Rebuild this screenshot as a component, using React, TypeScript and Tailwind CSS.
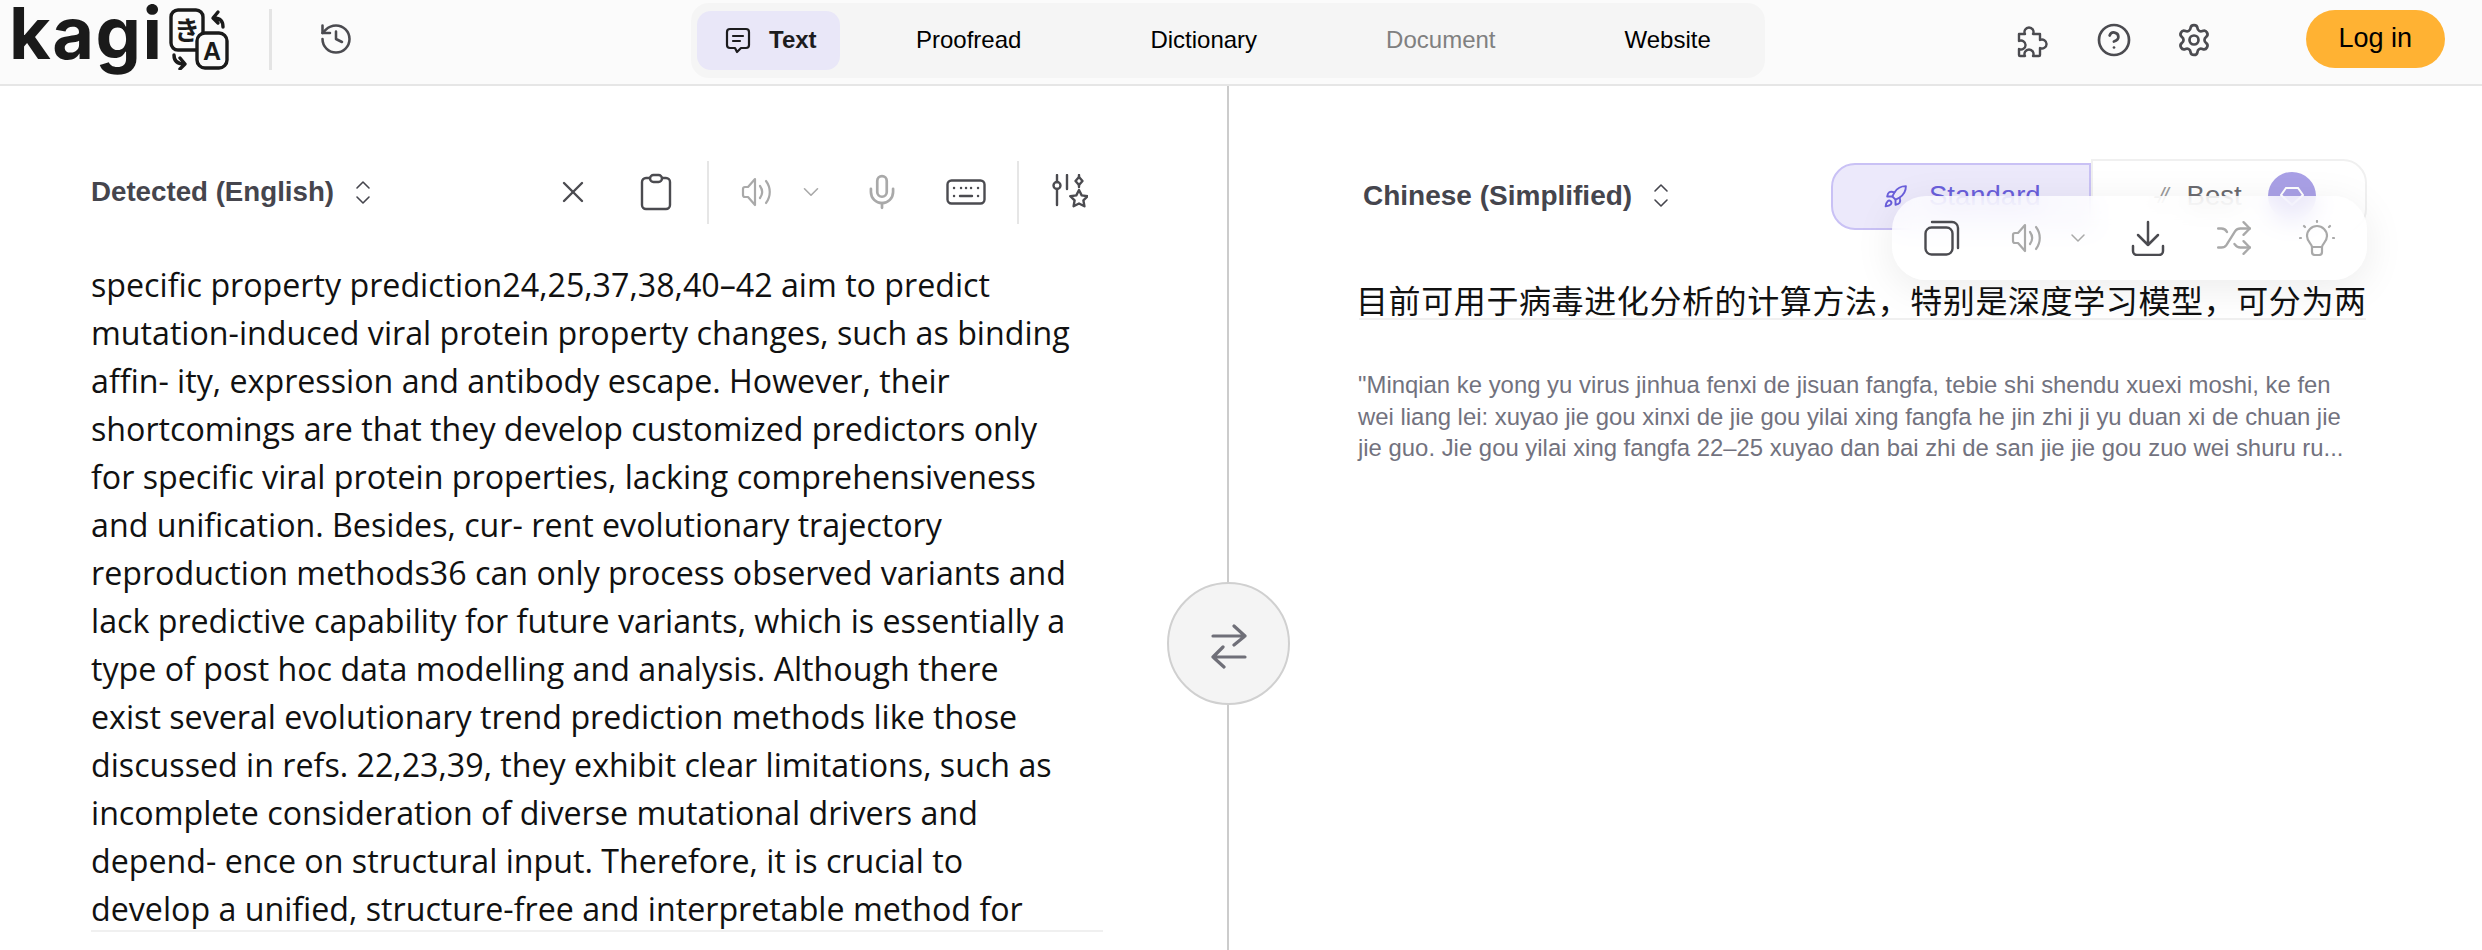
import React from 'react';
import { History, CircleHelp, Settings, X, Mic, ChevronDown, Rocket, Shuffle } from 'lucide-react';

const sans = "font-['Liberation_Sans',Arial,sans-serif]";

const leftText =
  'specific property prediction24,25,37,38,40–42 aim to predict mutation-induced viral protein property changes, such as binding affin- ity, expression and antibody escape. However, their shortcomings are that they develop customized predictors only for specific viral protein properties, lacking comprehensiveness and unification. Besides, cur- rent evolutionary trajectory reproduction methods36 can only process observed variants and lack predictive capability for future variants, which is essentially a type of post hoc data modelling and analysis. Although there exist several evolutionary trend prediction methods like those discussed in refs. 22,23,39, they exhibit clear limitations, such as incomplete consideration of diverse mutational drivers and depend- ence on structural input. Therefore, it is crucial to develop a unified, structure-free and interpretable method for';

const pinyin =
  '"Minqian ke yong yu virus jinhua fenxi de jisuan fangfa, tebie shi shendu xuexi moshi, ke fen wei liang lei: xuyao jie gou xinxi de jie gou yilai xing fangfa he jin zhi ji yu duan xi de chuan jie jie guo. Jie gou yilai xing fangfa 22–25 xuyao dan bai zhi de san jie jie gou zuo wei shuru ru...';

function UpDown() {
  return (
    <svg width="16" height="25" viewBox="0 0 16 25" fill="none" stroke="#45454d" strokeWidth="1.6" strokeLinecap="round" strokeLinejoin="round">
      <path d="M2 8l6-6 6 6" />
      <path d="M2 17l6 6 6-6" />
    </svg>
  );
}

function Speaker() {
  return (
    <svg width="34" height="34" viewBox="0 0 34 34" fill="none" stroke="#a9a9a9" strokeWidth="2.2" strokeLinecap="round" strokeLinejoin="round">
      <path d="M2 14v6a2 2 0 0 0 2 2h3l7 8V4L7 12H4a2 2 0 0 0-2 2z" />
      <path d="M19 11c2.6 3.6 2.6 8.400 0 12" />
      <path d="M25 6c5 6.500 5 15.500 0 22" />
    </svg>
  );
}

function TextBubble() {
  return (
    <svg width="26" height="27" viewBox="0 0 26 27" fill="none" stroke="#1c1c1e" strokeWidth="2.200" strokeLinecap="round" strokeLinejoin="round">
      <path d="M5 2h16a3 3 0 0 1 3 3v13a3 3 0 0 1-3 3h-5l-4 4-2-4H5a3 3 0 0 1-3-3V5a3 3 0 0 1 3-3z" />
      <path d="M8 9h10M8 14h7" />
    </svg>
  );
}

function PuzzleIcon() {
  return (
    <svg className="mb-[4px] ml-[251px]" width="34" height="36" viewBox="0 0 34 36" fill="none" stroke="#4b4b50" strokeWidth="2.400" strokeLinecap="round" strokeLinejoin="round">
      <path d="M3 12h6a4.500 4.500 0 1 1 8 0h7v6a4.500 4.500 0 1 1 0 8v7a1 1 0 0 1-1 1h-6a4.500 4.500 0 1 0-8 0H4a1 1 0 0 1-1-1v-6a4.500 4.500 0 1 0 0-8z" />
    </svg>
  );
}

function Logo() {
  return (
    <div className="flex items-start">
      <span className="ml-[9px] font-['Inter',sans-serif] text-[72px] leading-[66px] font-bold tracking-[1.500px] text-[#1a1a1a]">kagi</span>
      <svg className="ml-[5px] mt-[8px]" width="60" height="62" viewBox="0 0 60 62" fill="none" stroke="#1a1a1a" strokeWidth="3.400" strokeLinecap="round" strokeLinejoin="round">
        <rect x="2" y="2" width="32" height="40" rx="7" />
        <text x="18" y="32" textAnchor="middle" stroke="none" fill="#1a1a1a" fontSize="26" fontWeight="700" fontFamily="'Noto Sans CJK JP', sans-serif">き</text>
        <rect x="28" y="25" width="30" height="35" rx="8" fill="#fbfbfb" />
        <text x="43" y="52" textAnchor="middle" stroke="none" fill="#1a1a1a" fontSize="25" fontWeight="700" fontFamily="'Liberation Sans', sans-serif">A</text>
        <path d="M54 19c0-6-3-9-9-9M49 4l-5 6 5 5" />
        <path d="M5 47c0 6 3 9 10 9M11 50l5 6-5 5" />
      </svg>
    </div>
  );
}

function Header() {
  return (
    <header className="flex h-[86px] items-center border-b-2 border-[#e6e6e6] bg-[#fbfbfb]">
      <div className="flex h-full w-[691px] items-start">
        <Logo />
        <div className="ml-[40px] mt-[9px] h-[61px] w-[3px] bg-[#e4e4e4]" />
        <History className="ml-[46px] mt-[21px]" size={36} strokeWidth={1.7} color="#4b4b50" />
      </div>
      <nav className={`mb-[4px] flex h-[75px] items-center gap-[21px] rounded-[18px] bg-[#f5f5f5] pl-[6px] text-[24px] text-black ${sans}`}>
        <div className="mr-[1px] flex h-[59px] w-[143px] items-center gap-[18px] rounded-[14px] bg-[#e9e7f8] pl-[28px] font-bold text-[#1c1c1e]">
          <TextBubble />
          <span>Text</span>
        </div>
        <span className="px-[54px]">Proofread</span>
        <span className="px-[54px]">Dictionary</span>
        <span className="px-[54px] text-[#808080]">Document</span>
        <span className="px-[54px]">Website</span>
      </nav>
      <div className="flex flex-1 items-center">
        <PuzzleIcon />
        <CircleHelp className="ml-[46px] mb-[4px]" size={36} strokeWidth={1.8} color="#4b4b50" />
        <Settings className="ml-[44px] mb-[4px]" size={36} strokeWidth={1.8} color="#4b4b50" />
        <button className={`ml-[94px] mb-[7px] h-[58px] w-[139px] rounded-full bg-[#ffb233] text-[27px] text-black ${sans}`}>Log in</button>
      </div>
    </header>
  );
}

function LeftPanel() {
  return (
    <section className="w-[1227px] shrink-0 pl-[91px] pr-[106px]">
      <div className="mt-[78px] flex h-[56px] items-center">
        <span className={`text-[27.700px] font-bold text-[#45454d] ${sans}`}>Detected (English)</span>
        <span className="ml-[21px]"><UpDown /></span>
        <div className="ml-auto flex items-center">
          <span className="flex w-[83px] justify-center"><X size={36} strokeWidth={1.600} color="#4b4b50" /></span>
          <span className="flex w-[83px] justify-center">
            <svg width="32" height="38" viewBox="0 0 32 38" fill="none" stroke="#4b4b50" strokeWidth="2.400" strokeLinecap="round" strokeLinejoin="round">
              <path d="M10 5H6a4 4 0 0 0-4 4v23a4 4 0 0 0 4 4h20a4 4 0 0 0 4-4V9a4 4 0 0 0-4-4h-4" />
              <rect x="10" y="2" width="12" height="7" rx="3.500" />
            </svg>
          </span>
          <div className="ml-[10px] mr-[24px] h-[63px] w-[2px] bg-[#e6e6e6]" />
          <span className="flex w-[50px] justify-center"><Speaker /></span>
          <span className="flex w-[56px] justify-center"><ChevronDown size={26} strokeWidth={1.500} color="#a9a9a9" /></span>
          <span className="flex w-[86px] justify-center"><Mic size={38} strokeWidth={1.700} color="#a9a9a9" /></span>
          <span className="flex w-[82px] justify-center">
            <svg width="40" height="26" viewBox="0 0 40 26" fill="none" stroke="#4b4b50" strokeWidth="2.400" strokeLinecap="round">
              <rect x="1.500" y="1.500" width="37" height="23" rx="4" />
              <path d="M8 9h.1M15 9h.1M20 9h.1M25 9h.1M32 9h.1M8 17h.1M14 17h12M32 17h.1" />
            </svg>
          </span>
          <div className="ml-[10px] h-[63px] w-[2px] bg-[#e6e6e6]" />
          <span className="flex w-[102px] justify-center">
            <svg width="36" height="37" viewBox="0 0 36 37" fill="none" stroke="#4b4b50" strokeWidth="2.400" strokeLinecap="round" strokeLinejoin="round">
              <path d="M5 1v7M5 15v16M15 1v14M27 1v2M27 11v2" />
              <circle cx="5" cy="11.500" r="3.500" />
              <path d="M27 3l3.500 4-3.500 4-3.500-4z" />
              <path d="M27 16l2.700 5.400 6 .8-4.300 4.200 1 5.900-5.400-2.800-5.400 2.800 1-5.900-4.300-4.200 6-.8z" />
            </svg>
          </span>
        </div>
      </div>
      <div className="mt-[41px] h-[671px] w-[1012px] border-b-2 border-[#f0f0f0] pr-[29px] font-['Open_Sans',sans-serif] text-[32.200px] leading-[48px] text-[#111]">
        {leftText}
      </div>
    </section>
  );
}

function Divider() {
  return (
    <div className="relative w-[2px] shrink-0 bg-[#cccccc]">
      <button className="absolute left-[-60px] top-[496px] flex h-[123px] w-[123px] items-center justify-center rounded-full border-2 border-[#d0d0d0] bg-[#f4f4f4]">
        <svg className="mt-[5px]" width="36" height="45" viewBox="0 0 36 45" fill="none" stroke="#6f6f78" strokeWidth="3.200" strokeLinecap="round" strokeLinejoin="round">
          <path d="M2 12h32M23 2l11 10-11 9" />
          <path d="M34 33H2M12 23L2 33l11 10" />
        </svg>
      </button>
    </div>
  );
}

function ResultBar() {
  return (
    <div className="absolute right-[115px] top-[110px] flex h-[84px] w-[475px] items-center rounded-[34px] bg-white/75 shadow-[0_8px_40px_rgba(0,0,0,0.08)] backdrop-blur-md">
      <span className="ml-[32px]">
        <svg width="36" height="36" viewBox="0 0 36 36" fill="none" stroke="#4b4b50" strokeWidth="2.400" strokeLinecap="round" strokeLinejoin="round">
          <rect x="1.500" y="7.500" width="27" height="27" rx="6" />
          <path d="M8 2h20a6 6 0 0 1 6 6v20" />
        </svg>
      </span>
      <span className="ml-[51px]"><Speaker /></span>
      <span className="ml-[21px]"><ChevronDown size={24} strokeWidth={1.500} color="#a9a9a9" /></span>
      <span className="ml-[41px]">
        <svg width="34" height="36" viewBox="0 0 34 36" fill="none" stroke="#4b4b50" strokeWidth="2.500" strokeLinecap="round" strokeLinejoin="round">
          <path d="M17 2v23M7 15l10 10 10-10" />
          <path d="M2 26v5a4 4 0 0 0 4 4h22a4 4 0 0 0 4-4v-5" />
        </svg>
      </span>
      <span className="ml-[50px]"><Shuffle size={38} strokeWidth={1.500} color="#a9a9a9" /></span>
      <span className="ml-[46px]">
        <svg width="36" height="36" viewBox="0 0 36 36" fill="none" stroke="#a9a9a9" strokeWidth="2.200" strokeLinecap="round" strokeLinejoin="round">
          <path d="M18 1v1M5 6l1 1M31 6l-1 1M1 18h1M34 18h1" />
          <path d="M13 27c0-3-5-5-5-11a10 10 0 0 1 20 0c0 6-5 8-5 11z" />
          <path d="M13 27v5a3 3 0 0 0 3 3h4a3 3 0 0 0 3-3v-5" />
        </svg>
      </span>
    </div>
  );
}

function RightPanel() {
  return (
    <section className="relative flex-1 pl-[130px] pr-[115px]">
      <div className="mt-[74px] flex h-[71px] items-center">
        <span className={`ml-[4px] text-[28px] font-bold text-[#45454d] ${sans}`}>Chinese (Simplified)</span>
        <span className="ml-[21px]"><UpDown /></span>
        <div className={`ml-auto flex text-[27.500px] ${sans}`}>
          <div className="mt-[4px] flex h-[67px] w-[260px] items-center rounded-l-[24px] border-2 border-[#c9c1f5] bg-[#ece9fb] pl-[50px] text-[#6a5fdb]">
            <Rocket size={25} strokeWidth={1.800} color="#6a5fdb" />
            <span className="ml-[21px]">Standard</span>
          </div>
          <div className="flex h-[74px] w-[276px] items-center rounded-r-[24px] border-2 border-[#f0f0f0] pl-[60px] text-[#6b6b70]">
            <span className="text-[22px] italic tracking-[-2px] text-[#9a9a9a]">-//</span>
            <span className="ml-[20px]">Best</span>
            <span className="ml-[26px] flex h-[48px] w-[48px] items-center justify-center rounded-full bg-[#a9a0e6]">
              <svg width="24" height="20" viewBox="0 0 24 20" fill="none" stroke="#fff" strokeWidth="2"><path d="M6 2h12l5 7-11 10L1 9z" /></svg>
            </span>
          </div>
        </div>
      </div>
      <div className="ml-[-3px] mt-[52px] h-[35px] w-[1010px] whitespace-nowrap font-['Noto_Sans_CJK_SC',sans-serif] text-[32px] leading-[32px] tracking-[0.600px] text-[#111]">
        目前可用于病毒进化分析的计算方法，特别是深度学习模型，可分为两
      </div>
      <div className="h-[2px] w-[1007px] bg-[#f0f0f0]" />
      <p className={`ml-[-1px] mt-[49px] w-[1007px] text-[23.900px] leading-[31.500px] text-[#72727e] ${sans}`}>{pinyin}</p>
      <ResultBar />
    </section>
  );
}

export default function App() {
  return (
    <div className="h-[950px] w-full overflow-hidden bg-white">
      <Header />
      <main className="flex h-[864px]">
        <LeftPanel />
        <Divider />
        <RightPanel />
      </main>
    </div>
  );
}
